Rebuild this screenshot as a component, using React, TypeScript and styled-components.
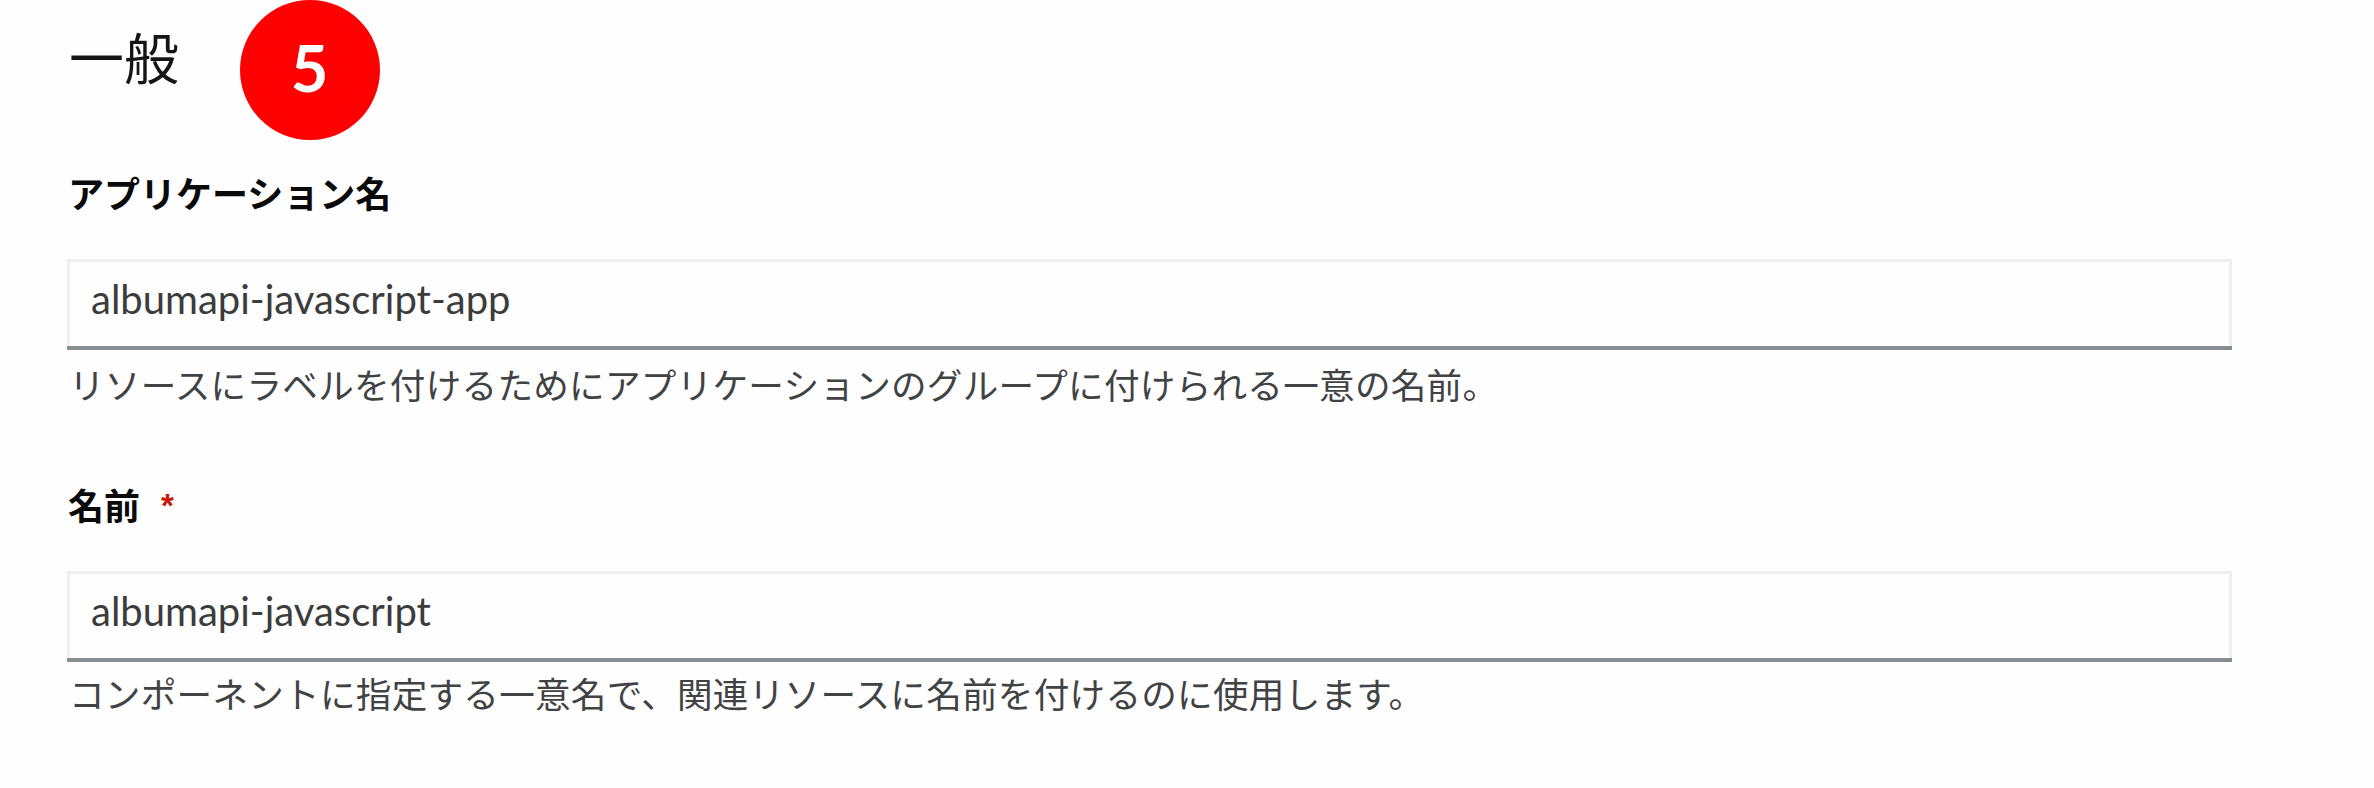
import React from "react";
import styled, { createGlobalStyle } from "styled-components";

const GlobalStyle = createGlobalStyle`
  * { box-sizing: border-box; }
  body { margin: 0; background: #fefefe; }
`;

const Page = styled.main`
  min-height: 788px;
  padding: 0 142px 0 67px;
  background: #fefefe;
  color: #151515;
  font-family: "Noto Sans CJK JP", sans-serif;
`;

const Header = styled.header`
  display: flex;
  align-items: flex-start;
  height: 140px;
  padding-left: 2px;
`;

const Title = styled.h1`
  width: 171px;
  margin: 15px 0 0;
  font-size: 55px;
  line-height: 80px;
  font-weight: 400;
`;

const StepBadge = styled.span`
  display: flex;
  align-items: center;
  justify-content: center;
  width: 140px;
  height: 140px;
  border-radius: 50%;
  background: #ff0000;
  color: #fff;
  font: 700 65px/1 Lato, sans-serif;
  padding: 0 1px 6px 0;
`;

const Form = styled.form`
  display: flex;
  flex-direction: column;
  padding-top: 25px;
`;

const Field = styled.div`
  display: flex;
  flex-direction: column;
  height: 312px;
`;

const Label = styled.label`
  height: 94px;
  padding-left: 1px;
  color: #0a0a0a;
  font-size: 36px;
  font-weight: 700;
  line-height: 54px;
`;

const Required = styled.span`
  display: inline-block;
  margin-left: 21px;
  color: #c9190b;
  font: 700 33px/1 "Liberation Sans", sans-serif;
  vertical-align: 3px;
`;

const Input = styled.input`
  width: 100%;
  height: 91px;
  padding: 0 24px 12px;
  border: 0;
  border-radius: 0;
  outline: 0;
  background: #fefefe;
  box-shadow: inset 0 -4px #8a8d90, inset 0 0 0 3px #f0f0f0;
  color: #3c3c3c;
  font: 400 40px/1.2 Lato, sans-serif;
`;

const Help = styled.p<{ $offset: number }>`
  margin: ${({ $offset }) => $offset}px 0 0;
  padding-left: 2px;
  color: #414244;
  font-size: 35.6px;
  letter-spacing: 0.27px;
  line-height: 54px;
  white-space: nowrap;
`;

interface FormFieldProps {
  id: string;
  label: string;
  value: string;
  help: string;
  helpOffset: number;
  required?: boolean;
}

function FormField({ id, label, value, help, helpOffset, required }: FormFieldProps) {
  return (
    <Field>
      <Label htmlFor={id}>
        {label}
        {required && <Required>*</Required>}
      </Label>
      <Input id={id} defaultValue={value} spellCheck={false} />
      <Help $offset={helpOffset}>{help}</Help>
    </Field>
  );
}

export default function App() {
  return (
    <>
      <GlobalStyle />
      <Page>
        <Header>
          <Title>一般</Title>
          <StepBadge>5</StepBadge>
        </Header>
        <Form>
          <FormField
            id="application"
            label="アプリケーション名"
            value="albumapi-javascript-app"
            help="リソースにラベルを付けるためにアプリケーションのグループに付けられる一意の名前。"
            helpOffset={7}
          />
          <FormField
            id="name"
            label="名前"
            value="albumapi-javascript"
            help="コンポーネントに指定する一意名で、関連リソースに名前を付けるのに使用します。"
            helpOffset={4}
            required
          />
        </Form>
      </Page>
    </>
  );
}
